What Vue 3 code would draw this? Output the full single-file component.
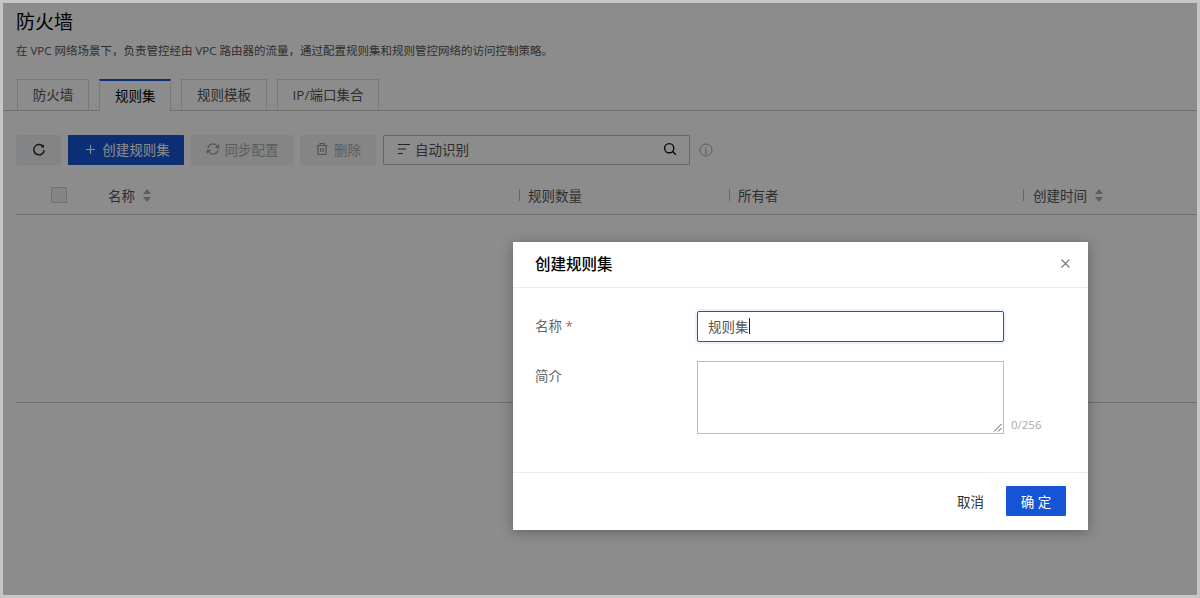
<template>
  <div class="frame">
    <div class="page">
      <h1 class="title">防火墙</h1>
      <p class="desc">在 VPC 网络场景下，负责管控经由 VPC 路由器的流量，通过配置规则集和规则管控网络的访问控制策略。</p>

      <div class="tabs">
        <span
          v-for="tab in tabs"
          :key="tab"
          :class="['tab', { 'tab--active': tab === '规则集' }]"
        >{{ tab }}</span>
      </div>

      <div class="toolbar">
        <button class="btn btn--icon">
          <svg width="14" height="14" viewBox="0 0 14 14" fill="none" stroke="#222" stroke-width="1.4">
            <path d="M11.6 4.2A5.2 5.2 0 1 0 12.2 7" />
            <path d="M12 1.4v3.2H8.8" fill="#222" stroke="none" />
          </svg>
        </button>
        <button class="btn btn--primary">
          <svg width="11" height="11" viewBox="0 0 12 12" stroke="#fff" stroke-width="1.2"><path d="M6 1v10M1 6h10" /></svg>
          创建规则集
        </button>
        <button class="btn btn--disabled btn--sync">
          <svg width="14" height="14" viewBox="0 0 14 14" fill="none" stroke="#999" stroke-width="1.2">
            <path d="M2 6a5 5 0 0 1 9-2l1 1.4M12 8a5 5 0 0 1-9 2L2 8.6" />
            <path d="M12.6 2.4v3.2H9.4M1.4 11.6V8.4h3.2" />
          </svg>
          同步配置
        </button>
        <button class="btn btn--disabled btn--del">
          <svg width="14" height="14" viewBox="0 0 14 14" fill="none" stroke="#999" stroke-width="1.2">
            <path d="M1.5 3.5h11M5 3.5V1.5h4v2M3 3.5v9h8v-9M5.8 6v4M8.2 6v4" />
          </svg>
          删除
        </button>
        <div class="search">
          <svg width="14" height="12" viewBox="0 0 14 12" stroke="#444" stroke-width="1.1"><path d="M1 1.5h12M1 6h8M1 10.5h5" /></svg>
          <span class="search__text">自动识别</span>
          <svg class="search__icon" width="14" height="14" viewBox="0 0 14 14" fill="none" stroke="#111" stroke-width="1.4">
            <circle cx="6.2" cy="6.2" r="4.6" /><path d="M9.6 9.6l3.2 3.2" />
          </svg>
        </div>
        <svg class="info" width="14" height="14" viewBox="0 0 14 14" fill="none" stroke="#aaa">
          <circle cx="7" cy="7" r="6" /><path d="M7 6.2v4M5.8 10.2h2.4M5.8 6.2H7" /><path d="M7 3.6v1.2" />
        </svg>
      </div>

      <div class="table">
        <div class="thead">
          <div class="cell cell--check"><span class="checkbox"></span></div>
          <div class="cell cell--name">名称<span class="sort"></span></div>
          <div class="cell cell--count"><i class="sep"></i>规则数量</div>
          <div class="cell cell--owner"><i class="sep"></i>所有者</div>
          <div class="cell cell--time"><i class="sep"></i>创建时间<span class="sort"></span></div>
        </div>
        <div class="tbody"></div>
      </div>
    </div>

    <div class="mask"></div>

    <div class="dialog">
      <div class="dialog__head">
        <span class="dialog__title">创建规则集</span>
        <svg class="dialog__close" width="9" height="9" viewBox="0 0 9 9" stroke="#777" stroke-width="1.1"><path d="M.5.5l8 8M8.5.5l-8 8" /></svg>
      </div>
      <div class="dialog__body">
        <div class="field">
          <label class="field__label">名称 <em>*</em></label>
          <div class="input"><span>规则集</span><i class="caret"></i></div>
        </div>
        <div class="field field--area">
          <label class="field__label">简介</label>
          <div class="textarea">
            <svg class="grip" width="9" height="9" viewBox="0 0 9 9" stroke="#555"><path d="M1 8.5L8.5 1M5 8.5L8.5 5" /></svg>
          </div>
          <span class="counter">0/256</span>
        </div>
      </div>
      <div class="dialog__foot">
        <button class="link">取消</button>
        <button class="ok">确 定</button>
      </div>
    </div>
  </div>
</template>

<script setup>
const tabs = ['防火墙', '规则集', '规则模板', 'IP/端口集合'];
</script>

<style>
html, body { margin: 0; background: #c6c6c6; }
</style>

<style scoped>
.frame {
  position: relative;
  box-sizing: border-box;
  width: 1200px;
  height: 598px;
  border: 3px solid #c6c6c6;
  overflow: hidden;
  font-family: "Open Sans", "Noto Sans CJK SC", sans-serif;
  font-size: 13.5px;
  color: #333;
}
.page {
  box-sizing: border-box;
  height: 100%;
  padding: 7px 0 0 13px;
  background: #fff;
}
.title {
  margin: 0;
  font-size: 19px;
  font-weight: 400;
  line-height: 24px;
  color: #000;
}
.desc {
  margin: 8px 0 0;
  font-size: 11.5px;
  line-height: 18px;
  color: #555;
}
.tabs {
  display: flex;
  gap: 10px;
  height: 31px;
  margin: 19px 0 0 -13px;
  padding-left: 14px;
  border-bottom: 1px solid #ccc;
}
.tab {
  box-sizing: border-box;
  height: 31px;
  padding: 0 14.8px;
  line-height: 31px;
  background: #fff;
  border: 1px solid #ddd;
  border-bottom: 0;
  color: #555;
}
.tab--active {
  height: 32px;
  border-top: 2px solid #1554d4;
  border-color: #1554d4 #ddd #fff;
  color: #000;
  line-height: 30px;
}
.toolbar {
  display: flex;
  align-items: center;
  gap: 7px;
  margin-top: 24px;
}
.btn {
  display: flex;
  align-items: center;
  justify-content: center;
  gap: 5px;
  box-sizing: border-box;
  height: 30px;
  padding: 0 0 2px;
  border: 0;
  border-radius: 1px;
  font: inherit;
  background: #eef0f3;
}
.btn--icon { width: 45px; padding: 0; }
.btn--primary { width: 116px; gap: 6px; padding-left: 3px; background: #1554d4; color: #fff; }
.btn--disabled { background: #f2f2f2; color: #aaa; }
.btn--sync { width: 102px; }
.btn--del { width: 76px; }
.search {
  display: flex;
  align-items: center;
  gap: 4px;
  box-sizing: border-box;
  width: 307px;
  height: 30px;
  padding: 0 12px 2px 13px;
  border: 1px solid #bbb;
  border-radius: 1px;
  background: #fff;
  color: #555;
}
.search__icon { margin-left: auto; }
.info { margin-left: 2px; }
.table {
  margin-top: 12px;
  border-bottom: 1px solid #ccc;
}
.thead {
  display: flex;
  align-items: center;
  height: 38px;
  padding-bottom: 1px;
  box-sizing: border-box;
  border-bottom: 1px solid #ccc;
  color: #555;
}
.cell {
  display: flex;
  align-items: center;
  box-sizing: border-box;
  position: relative;
}
.cell--check { width: 92px; padding-left: 35px; }
.cell--name { width: 411px; }
.cell--count { width: 210px; padding-left: 9px; }
.cell--owner { width: 294px; padding-left: 9px; }
.cell--time { flex: 1; padding-left: 10px; }
.sep {
  position: absolute;
  left: 0;
  top: 50%;
  width: 1px;
  height: 12px;
  margin-top: -6px;
  background: #bbb;
}
.checkbox {
  width: 14px;
  height: 14px;
  border: 1px solid #ccc;
  background: #eef0f3;
  border-radius: 1px;
}
.sort {
  position: relative;
  width: 9px;
  height: 13px;
  margin-left: 7.5px;
}
.sort::before,
.sort::after {
  content: "";
  position: absolute;
  left: 0;
  border-left: 4.5px solid transparent;
  border-right: 4.5px solid transparent;
}
.sort::before { top: 0; border-bottom: 5px solid #aaa; }
.sort::after { bottom: 0; border-top: 5px solid #aaa; }
.tbody { height: 187px; }
.mask {
  position: absolute;
  inset: 0;
  background: rgba(0, 0, 0, 0.45);
}
.dialog {
  position: absolute;
  left: 510px;
  top: 239px;
  display: flex;
  flex-direction: column;
  width: 575px;
  height: 288px;
  background: #fff;
  box-shadow: 0 2px 12px rgba(0, 0, 0, 0.3);
}
.dialog__head {
  display: flex;
  align-items: center;
  justify-content: space-between;
  box-sizing: border-box;
  height: 46px;
  padding: 0 18px 2px 22px;
  border-bottom: 1px solid #eee;
}
.dialog__title {
  font-size: 15.5px;
  font-weight: 500;
  color: #000;
}
.dialog__body {
  flex: 1;
  padding: 23px 22px 0;
  color: #666;
}
.field {
  display: flex;
  align-items: center;
  height: 31px;
}
.field--area {
  align-items: flex-start;
  height: 73px;
  margin-top: 19px;
}
.field__label {
  width: 162px;
  flex-shrink: 0;
  line-height: 31px;
}
.field__label em { color: #e54545; font-style: normal; }
.input {
  display: flex;
  align-items: center;
  box-sizing: border-box;
  width: 307px;
  height: 31px;
  padding: 0 10px 2px;
  border: 1px solid #1554d4;
  border-radius: 2px;
  box-shadow: 0 0 0 2px #eaf2ff;
  color: #555;
}
.caret {
  width: 1px;
  height: 16px;
  background: #222;
}
.textarea {
  position: relative;
  box-sizing: border-box;
  width: 307px;
  height: 73px;
  border: 1px solid #bbb;
}
.grip {
  position: absolute;
  right: 1px;
  bottom: 1px;
}
.counter {
  align-self: flex-end;
  margin-left: 7px;
  font-size: 11.5px;
  line-height: 18px;
  color: #aaa;
}
.dialog__foot {
  display: flex;
  align-items: center;
  justify-content: flex-end;
  box-sizing: border-box;
  height: 58px;
  padding: 0 22px 2px 0;
  border-top: 1px solid #eee;
}
.link {
  padding: 0;
  margin-right: 22px;
  border: 0;
  background: none;
  font: inherit;
  color: #333;
}
.ok {
  width: 60px;
  height: 30px;
  padding: 0;
  border: 0;
  border-radius: 1px;
  background: #1554d4;
  color: #fff;
  font: inherit;
}
</style>
